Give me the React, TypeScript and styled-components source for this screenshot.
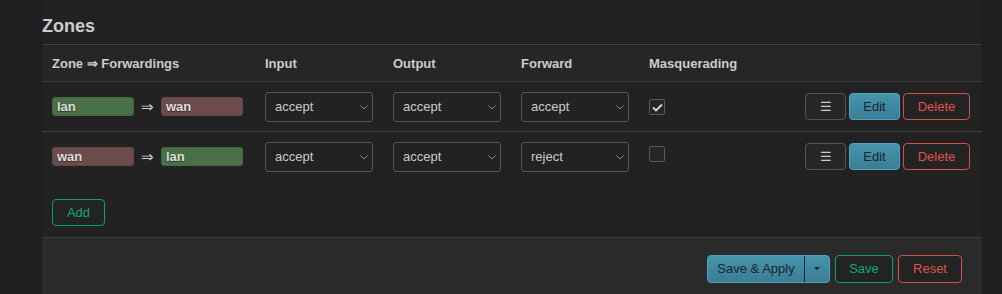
import * as React from 'react';
import styled, { createGlobalStyle } from 'styled-components';

const GlobalStyle = createGlobalStyle`
  html, body {
    margin: 0;
    padding: 0;
    background: #1f1f1f;
    font-family: "Liberation Sans", Arial, sans-serif;
    color: #ccc;
  }
`;

const Page = styled.div`
  width: 1002px;
  height: 294px;
  overflow: hidden;
  display: flex;
  background: #1f1f1f;
`;

const Main = styled.div`
  margin-left: 42px;
  width: 940px;
  display: flex;
  flex-direction: column;
  background: #222;
`;

const Title = styled.h3`
  margin: 0;
  padding: 16px 0 7px 0;
  height: 21px;
  font-size: 18px;
  font-weight: 700;
  color: #ccc;
`;

const Table = styled.table`
  width: 100%;
  border-collapse: collapse;
  table-layout: fixed;
`;

const HeadRow = styled.tr`
  background: #262626;
  border-top: 1px solid #3d3d3d;
  border-bottom: 1px solid #3d3d3d;
  height: 37px;
`;

const Th = styled.th<{ $w?: number }>`
  box-sizing: border-box;
  width: ${p => (p.$w ? `${p.$w}px` : 'auto')};
  text-align: left;
  padding: 0 10px;
  font-size: 13px;
  font-weight: 700;
  color: #ccc;
`;

const Row = styled.tr<{ $last?: boolean }>`
  height: 50px;
  border-bottom: ${p => (p.$last ? 'none' : '1px solid #3d3d3d')};
`;

const Td = styled.td<{ $right?: boolean }>`
  padding: 0 10px;
  vertical-align: middle;
  text-align: ${p => (p.$right ? 'right' : 'left')};
`;

const Flow = styled.div`
  display: flex;
  align-items: center;
`;

const Badge = styled.span<{ $kind: 'lan' | 'wan' }>`
  display: inline-block;
  box-sizing: border-box;
  width: 82px;
  height: 19px;
  line-height: 17px;
  padding: 0 4px;
  border-radius: 3px;
  font-size: 13px;
  font-weight: 700;
  color: #ddd;
  text-shadow: 0 1px 1px rgba(0, 0, 0, 0.5);
  background: ${p => (p.$kind === 'lan' ? '#4a7049' : '#6b4b4b')};
  border: 1px solid ${p => (p.$kind === 'lan' ? '#45673f' : '#634646')};
`;

const Arrow = styled.span`
  width: 27px;
  text-align: center;
  font-size: 15px;
  color: #ccc;
`;

const SelectWrap = styled.div`
  position: relative;
  width: 108px;
  height: 30px;
`;

const Select = styled.select`
  appearance: none;
  -webkit-appearance: none;
  box-sizing: border-box;
  width: 108px;
  height: 30px;
  padding: 0 9px;
  background: #222;
  border: 1px solid #555;
  border-radius: 3px;
  color: #ccc;
  font-family: "Liberation Sans", Arial, sans-serif;
  font-size: 13px;
  outline: none;
`;

const Chevron = styled.svg`
  position: absolute;
  right: 5px;
  top: 13px;
  width: 8px;
  height: 5px;
  pointer-events: none;
`;

const Check = styled.span`
  display: inline-flex;
  align-items: center;
  justify-content: center;
  box-sizing: border-box;
  width: 16px;
  height: 16px;
  margin-top: -8px;
  border: 1px solid #5a5a5a;
  border-radius: 2px;
  background: #262626;
`;

const Actions = styled.div`
  display: flex;
  justify-content: flex-end;
  gap: 3px;
  padding-right: 2px;
`;

type Tone = 'plain' | 'teal' | 'red' | 'green';

const toneColors: Record<Tone, { bg: string; border: string; color: string }> = {
  plain: { bg: '#262626', border: '#555', color: '#ccc' },
  teal: { bg: 'linear-gradient(#4794ad, #3a7e95)', border: '#4ea4c0', color: '#1b2529' },
  red: { bg: '#232323', border: '#d2504c', color: '#e0504c' },
  green: { bg: '#232323', border: '#0e9f63', color: '#10a766' },
};

const Button = styled.button<{ $tone: Tone; $w: number; $h?: number }>`
  box-sizing: border-box;
  flex: none;
  width: ${p => p.$w}px;
  height: ${p => p.$h ?? 27}px;
  padding: 0;
  border-radius: 4px;
  border: 1px solid ${p => toneColors[p.$tone].border};
  background: ${p => toneColors[p.$tone].bg};
  color: ${p => toneColors[p.$tone].color};
  font-family: "Liberation Sans", Arial, sans-serif;
  font-size: 13px;
  cursor: pointer;
`;

const AddWrap = styled.div`
  padding: 17px 10px 11px 10px;
`;

const Footer = styled.div`
  flex: 1;
  background: #2a2a2a;
  border-top: 1px solid #3d3d3d;
  display: flex;
  justify-content: flex-end;
  align-items: flex-start;
  gap: 5px;
  padding: 17px 20px 0 0;
`;

const Split = styled.div`
  display: flex;
  box-sizing: border-box;
  width: 123px;
  height: 28px;
  border-radius: 4px;
  border: 1px solid #4ea4c0;
  background: linear-gradient(#4794ad, #3a7e95);
  overflow: hidden;
`;

const SplitMain = styled.span`
  flex: 1;
  display: flex;
  align-items: center;
  justify-content: center;
  font-size: 13px;
  color: #1b2529;
  border-right: 1px solid #1b2529;
`;

const SplitCaret = styled.span`
  width: 24px;
  display: flex;
  align-items: center;
  justify-content: center;
`;

const policies = ['accept', 'reject', 'drop'];

function PolicySelect({ value }: { value: string }) {
  return (
    <SelectWrap>
      <Select defaultValue={value}>
        {policies.map(p => (
          <option key={p} value={p}>{p}</option>
        ))}
      </Select>
      <Chevron viewBox="0 0 8 5">
        <path d="M0.5 0.5 L4 4 L7.5 0.5" fill="none" stroke="#888" strokeWidth="1" />
      </Chevron>
    </SelectWrap>
  );
}

const zones = [
  { from: 'lan' as const, to: 'wan' as const, input: 'accept', output: 'accept', forward: 'accept', masq: true },
  { from: 'wan' as const, to: 'lan' as const, input: 'accept', output: 'accept', forward: 'reject', masq: false },
];

export default function App() {
  return (
    <Page>
      <GlobalStyle />
      <Main>
        <Title>Zones</Title>
        <Table>
          <thead>
            <HeadRow>
              <Th $w={213}>Zone ⇒ Forwardings</Th>
              <Th $w={128}>Input</Th>
              <Th $w={128}>Output</Th>
              <Th $w={128}>Forward</Th>
              <Th $w={140}>Masquerading</Th>
              <Th />
            </HeadRow>
          </thead>
          <tbody>
            {zones.map((z, i) => (
              <Row key={z.from} $last={i === zones.length - 1}>
                <Td>
                  <Flow>
                    <Badge $kind={z.from}>{z.from}</Badge>
                    <Arrow>⇒</Arrow>
                    <Badge $kind={z.to}>{z.to}</Badge>
                  </Flow>
                </Td>
                <Td><PolicySelect value={z.input} /></Td>
                <Td><PolicySelect value={z.output} /></Td>
                <Td><PolicySelect value={z.forward} /></Td>
                <Td>
                  <Check>
                    {z.masq && (
                      <svg width="11" height="9" viewBox="0 0 11 9">
                        <path d="M1 4.5 L4 7.5 L10 1.5" fill="none" stroke="#ddd" strokeWidth="1.8" />
                      </svg>
                    )}
                  </Check>
                </Td>
                <Td $right>
                  <Actions>
                    <Button $tone="plain" $w={41}>☰</Button>
                    <Button $tone="teal" $w={51}>Edit</Button>
                    <Button $tone="red" $w={67}>Delete</Button>
                  </Actions>
                </Td>
              </Row>
            ))}
          </tbody>
        </Table>
        <AddWrap>
          <Button $tone="green" $w={53}>Add</Button>
        </AddWrap>
        <Footer>
          <Split>
            <SplitMain>Save &amp; Apply</SplitMain>
            <SplitCaret>
              <svg width="6" height="4" viewBox="0 0 6 4">
                <path d="M0 0 L6 0 L3 3 Z" fill="#1b2529" />
              </svg>
            </SplitCaret>
          </Split>
          <Button $tone="green" $w={58} $h={28}>Save</Button>
          <Button $tone="red" $w={64} $h={28}>Reset</Button>
        </Footer>
      </Main>
    </Page>
  );
}
